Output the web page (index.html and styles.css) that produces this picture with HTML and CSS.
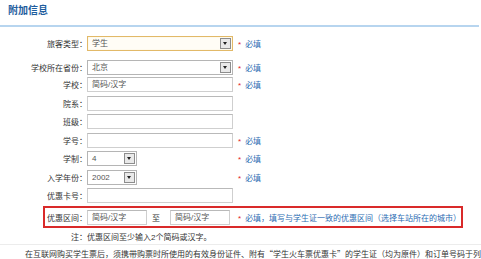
FILE: index.html
```html
<!DOCTYPE html>
<html lang="zh-CN">

<head>
  <meta charset="UTF-8" />
  <meta name="viewport" content="width=device-width, initial-scale=1.0" />
  <title>附加信息</title>
  <link rel="stylesheet" href="styles.css">
</head>

<body>
  <div class="panel">
    <h2 class="panel-title">附加信息</h2>

    <div class="form">
      <div class="row row-first">
        <span class="label">旅客类型：</span>
        <div class="field">
          <div class="select select-focus">
            <span class="select-value">学生</span>
            <span class="select-arrow"></span>
          </div>
        </div>
        <span class="req"><b>*</b>必填</span>
      </div>

      <div class="row row-province">
        <span class="label">学校所在省份：</span>
        <div class="field">
          <div class="select">
            <span class="select-value">北京</span>
            <span class="select-arrow"></span>
          </div>
        </div>
        <span class="req"><b>*</b>必填</span>
      </div>

      <div class="row row-tight">
        <span class="label">学校：</span>
        <div class="field">
          <div class="input">简码/汉字</div>
        </div>
        <span class="req"><b>*</b>必填</span>
      </div>

      <div class="row">
        <span class="label">院系：</span>
        <div class="field">
          <div class="input"></div>
        </div>
      </div>

      <div class="row">
        <span class="label">班级：</span>
        <div class="field">
          <div class="input"></div>
        </div>
      </div>

      <div class="row">
        <span class="label">学号：</span>
        <div class="field">
          <div class="input"></div>
        </div>
        <span class="req"><b>*</b>必填</span>
      </div>

      <div class="row">
        <span class="label">学制：</span>
        <div class="field">
          <div class="select select-short">
            <span class="select-value">4</span>
            <span class="select-arrow"></span>
          </div>
        </div>
        <span class="req"><b>*</b>必填</span>
      </div>

      <div class="row">
        <span class="label">入学年份：</span>
        <div class="field">
          <div class="select select-short">
            <span class="select-value">2002</span>
            <span class="select-arrow"></span>
          </div>
        </div>
        <span class="req"><b>*</b>必填</span>
      </div>

      <div class="row">
        <span class="label">优惠卡号：</span>
        <div class="field">
          <div class="input"></div>
        </div>
      </div>

      <div class="row row-range">
        <span class="label">优惠区间：</span>
        <div class="field range">
          <div class="input input-half">简码/汉字</div>
          <span class="range-to">至</span>
          <div class="input input-half">简码/汉字</div>
        </div>
        <span class="req"><b>*</b>必填，填写与学生证一致的优惠区间（选择车站所在的城市）</span>
      </div>

      <div class="row row-note">
        <span class="label">注：</span>
        <span class="note">优惠区间至少输入2个简码或汉字。</span>
      </div>
    </div>

    <p class="footer-text">在互联网购买学生票后，须携带购票时所使用的有效身份证件、附有“学生火车票优惠卡”的学生证（均为原件）和订单号码于列</p>
  </div>
</body>

</html>
```

FILE: styles.css
```css
body {
  margin: 0;
  background-color: white;
  color: #333;
  font-family: "Liberation Sans", "Noto Sans CJK SC", sans-serif;
  font-size: 8px;
}

.panel {
  width: 481px;
  overflow: hidden;
}

.panel-title {
  margin: 0 2px 0 0;
  padding: 5px 8px 0;
  height: 20px;
  font-size: 10px;
  line-height: 12px;
  color: #1f5e9e;
  border-bottom: 2px solid #b7d5ef;
}

.form {
  padding-top: 9px;
}

.row {
  display: grid;
  grid-template-columns: 87px 151px auto;
  align-items: center;
  height: 15px;
  margin-top: 3.5px;
}

.row-first {
  margin-top: 0;
}

.row-province {
  margin-top: 9px;
}

.row-tight {
  margin-top: 2px;
}

.label {
  text-align: right;
  white-space: nowrap;
}

.field {
  display: flex;
  align-items: center;
}

.input,
.select {
  box-sizing: border-box;
  height: 15px;
  border: 1px solid #cfcfcf;
  border-top-color: #b9b9b9;
  background-color: white;
  color: #555;
  line-height: 13px;
  padding-left: 4px;
  white-space: nowrap;
}

.input {
  width: 146px;
}

.select {
  display: flex;
  align-items: center;
  width: 146px;
  padding-right: 1px;
  border-color: #b5b5b5;
}

.select-focus {
  border-color: #e2b968;
  background-color: #fffdf6;
  box-shadow: inset 0 0 1px #f0d9a4;
}

.select-short {
  width: 50px;
}

.select-value {
  flex: 1;
}

.select-arrow {
  position: relative;
  box-sizing: border-box;
  width: 11px;
  height: 11px;
  border: 1px solid #8d8d8d;
  background-color: #e9e9e9;
}

.select-arrow::after {
  content: "";
  position: absolute;
  left: 2px;
  top: 3px;
  border-left: 2.5px solid transparent;
  border-right: 2.5px solid transparent;
  border-top: 3px solid #222;
}

.req {
  color: #2d6db3;
  white-space: nowrap;
}

.req b {
  color: #e22424;
  font-weight: normal;
  margin-right: 4px;
}

.row-range {
  box-sizing: border-box;
  width: 420px;
  height: 22px;
  margin: 3px 0 0 43px;
  border: 2px solid #d92a2a;
  grid-template-columns: 42px 151px auto;
}

.input-half {
  width: 60px;
}

.range-to {
  box-sizing: border-box;
  width: 23px;
  padding-left: 5px;
}

.row-note {
  margin-top: 2px;
  height: 12px;
}

.note {
  grid-column: 2 / 4;
}

.footer-text {
  margin: 2px 0 0;
  padding: 4px 0 0 25px;
  border-top: 1px solid #ececec;
  white-space: nowrap;
  font-family: "Noto Sans CJK SC", sans-serif;
  font-size: 8px;
  line-height: 10px;
}
```
